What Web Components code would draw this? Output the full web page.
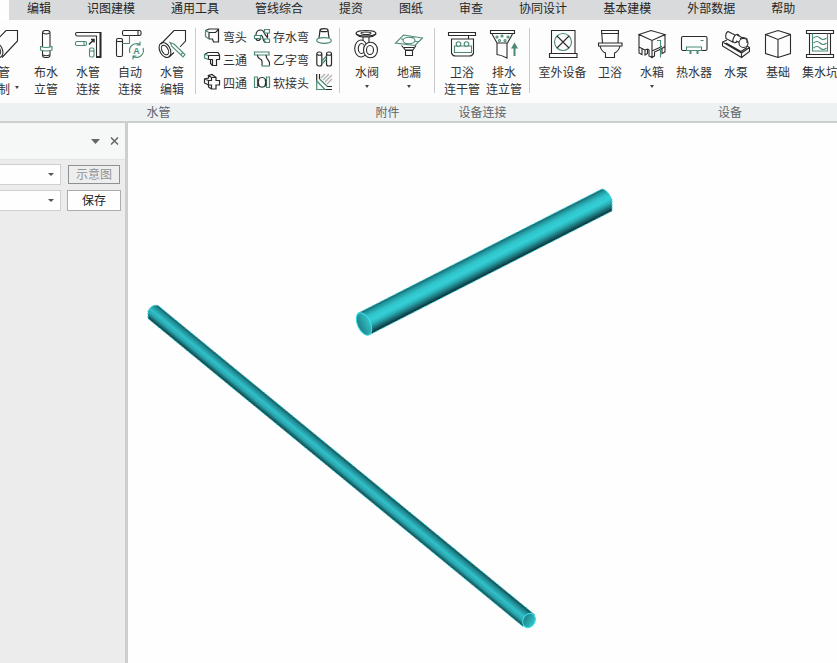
<!DOCTYPE html>
<html lang="zh-CN">
<head>
<meta charset="utf-8">
<title>水管建模</title>
<style>
html, body { height: 100%; }
body { margin: 0; overflow: hidden; background: #fefefe; font: 12px/17px "Noto Sans CJK SC", "Liberation Sans", sans-serif; color: #333; }
</style>
</head>
<body>
<bim-app></bim-app>
<script>
const ICONS = {
  draw: `<path d="M3 14 16 .5H27.5V11L12 27.5"/><ellipse cx="7" cy="20" rx="5.2" ry="8" transform="rotate(-28 7 20)"/><ellipse cx="7" cy="20" rx="3" ry="5.2" transform="rotate(-28 7 20)"/>`,
  riser: `<rect x="10.5" y=".5" width="7.5" height="27" rx="2.5"/><path d="M11 3q3.2 2 6.5 0M11 25q3.2 1.500 6.500 0"/><path class="g w" d="M8.500 16.500q5.700 2 11.500 0v3.500q-5.800 2-11.500 0z"/>`,
  join: `<path d="M26.500 27V2.500H3Q1.500 2.500 1.500 4T3 6H22.500V27"/><path d="M26.500 2V27H22" stroke-width="2"/><rect class="g" x="1.500" y="11.500" width="11" height="4" rx="1.500"/><path class="g" d="M10 11.500v4"/><rect class="g" x="15.500" y="18" width="4.500" height="9" rx="1.500"/><path class="g" d="M15.500 21h4.500"/><path d="M15 14.500 19.500 10M17 9.500h3v3" stroke-width="1.500"/>`,
  auto: `<rect x="6.500" y=".5" width="18.500" height="5" rx="1.500"/><path d="M22 .5v5"/><rect x=".5" y="8.500" width="6" height="18" rx="1.500"/><path d="M.5 11.500h6"/><path class="g" d="M13.500 5.500v8h-7"/><path class="g" d="M14 23a7 7 0 0 1 10-8.500M27 18a7 7 0 0 1-10 8.500M24 11.500v3.500h-3.500M17 29.500V26h3.500"/><text class="t" x="20.500" y="24" text-anchor="middle">A</text>`,
  edit: `<path d="M3 14 16 .5H27.500V11L22 17M11 27l5-4.500"/><ellipse cx="7" cy="20" rx="5.200" ry="8" transform="rotate(-28 7 20)"/><ellipse cx="7" cy="20" rx="3" ry="5.200" transform="rotate(-28 7 20)"/><path class="g w" d="M12 12.500l4 1.500L27 24.500 25 27 14 16.500zM23 24.500l2-2"/>`,
  valve: `<ellipse cx="13" cy="3.300" rx="10" ry="2.800"/><ellipse cx="13" cy="3.300" rx="5" ry="1.300"/><path d="M3 4q3 3 7 3v4M23 4q-3 3-7 3v5M10 7h6"/><ellipse class="w" cx="8" cy="18.500" rx="6.300" ry="8.500"/><ellipse cx="8.500" cy="18.500" rx="3.200" ry="5"/><ellipse class="w" cx="17.500" cy="20" rx="7" ry="7.800"/><ellipse cx="17" cy="20" rx="3.500" ry="4.500"/>`,
  drain: `<path class="g" d="M8.500 5 27.500 8 20 15.500.5 13zM6 9l18 3M10 14l8-7"/><ellipse class="g w" cx="14" cy="10.500" rx="6" ry="3.200"/><path d="M6.500 15.500 10.500 20h7.500l3-4.500M10.500 20.500h7V25.500h-7zM9 17.500h10"/>`,
  tub: `<path d="M.5 2.500h27v3H.5zM20.500 5.500v3M3.500 9h22v14q-1 3-4 3h-14q-3 0-4-3z"/><path class="g" d="M6.500 16h17v6.500h-17z"/><circle class="g w" cx="10.500" cy="14" r="2.300"/><circle class="g w" cx="18.500" cy="14" r="2.300"/>`,
  drop: `<path d="M.5.500h24v3H.5zM2 4l5 9h10.500l5-9M7 13v11.500q4 .5 10 3.500V13"/><g class="g"><circle cx="7" cy="7" r="1"/><circle cx="12" cy="6" r="1"/><circle cx="18" cy="7" r="1"/><circle cx="9.500" cy="10.500" r="1"/><circle cx="15" cy="10.500" r="1"/></g><path class="g" d="M24.500 26V16" stroke-width="2"/><path class="gf" d="M21 18.500 24.500 12.500 28 18.500z"/>`,
  outdoor: `<path d="M2.500.500H26v23H2.500zM.5 23.500H28v4H.5z"/><circle class="g" cx="14" cy="12" r="8.500"/><path d="M8 6l12 12M20 6L8 18"/>`,
  toilet: `<path d="M5.500.500h17L22 13H6.500zM6 3.500h16M2.500 13h23.500v3H2.500zM4 16q1 5 5.500 7v4.500h9V23q4.500-2 5.500-7"/>`,
  tank: `<path d="M1 4.500 13 .5 27 4.500 14 10.500zM1 4.500V23l3 1.500V18.500L1 17M27 4.500V22l-3 1.500V18.500M14 10.500V21l10-4.500M4 18.500l3 1.500v5l2.500-1.500V19M7 20l2.500-1M9.500 19l1.500 1v6l3 1.500V21M14 27.500l2.500-1.500v-4L24 18.500l3-2"/><path class="g" d="M19 10.500h3.500v17"/>`,
  heater: `<rect x="1.500" y="6.500" width="25.500" height="14" rx="1.500"/><path class="g w" d="M6.500 20.500V17h15v3.500zM20.500 10.500h3"/><path class="g" d="M10.500 20v4M17.500 20v4" stroke-width="2"/>`,
  pump: `<path d="M5 10 .5 12v4L19.500 27.500 27.500 21.500v-4L22 14M.5 12l19 11 8-5.500M19.500 23v4.500M4 13l15 8.500 6-4"/><path class="w" d="M6 1.500l7 3.500-2.500 7L4 8.500Q3 3 6 1.500z"/><ellipse class="w" cx="14" cy="8.500" rx="2.500" ry="4.500" transform="rotate(25 14 8.500)"/><path class="w" d="M15 5l6 3v6l-7-3"/><circle class="w" cx="21.500" cy="13" r="4.500"/><path d="M18 9q3-3 7 0v4"/>`,
  cube: `<path d="M1.500 4.500 14 .5 26.500 4.500V23.500L14 27.500 1.500 23.500zM1.500 4.500 14 9.500 26.500 4.500M14 9.500v18"/>`,
  sump: `<path d="M.5.500H27.500v3H.5zM.5 24.500h27v3H.5zM3.500 3.500v21M24.500 3.500v21"/><path class="g" d="M6.500 3.500V21h15V3.500M7.500 8q3.500-3 6.500 0t6.500 0M7.500 13q3.500-3 6.500 0t6.500 0M7.500 18q3.500-3 6.500 0t6.500 0"/>`,
  elbow: `<path d="M1.500 2.500 5 1h9.500V14H9.500L8.500 11H5M5 11V4.500h6.500l3-3"/><path class="g" d="M1.500 2.500 5 4.500M1.500 2.500V8.500L5 11"/>`,
  tee: `<path d="M.5 3.500 4 1.500h10l1.500 2.500v4.500h-3V14.500h-4V8.500H4.500V4.500H15.500M8.500 14.500l-2-2V8.500"/><path class="g" d="M4.500 4.500.5 3.500v3.500l4 1.500"/>`,
  cross: `<path d="M7.500 3.500H12V6.500h3.500v4.500H12V15H7.500V11H4.500V6.500H7.500zM7.500 3.500 4.500 1.500 8 .5l4 3M4.500 1.500V4L.5 5v4l4 2M.5 5l4 1.500M7.500 15l-3-2v-2"/>`,
  trap: `<path d="M2 7q0-5 5-5 2 0 3 2.500T13.500 9.500V5M6 8q2-2 3 2.500Q9.500 14 12 14M2 10.500q0 2 3 2l2-2"/><path class="g" d="M10.500 1.500h5v3.500h-5zM.5 7.500h6v3h-6zM10.500 11h5v3.500h-5z"/>`,
  offset: `<path class="g" d="M.5 1h14.500v3H.5z"/><path d="M3.500 4Q3.500 7 7 8.500q1.500 1 1 6M12 4q0 3 2.500 5.500 1.500 1.500 1 5"/><path class="g" d="M7.500 15h8.500"/>`,
  hose: `<path class="g" d="M.5 3h3v10.500H.5zM12.500 3h3v10.500H12.500z"/><path d="M3.500 6.500Q8 0 12.500 6.500M3.500 10.500Q8 16 12.500 10.500M5 5.500q-2 3 0 6M11 5.500q2 3 0 6"/>`,
  cone: `<ellipse cx="8" cy="2.200" rx="4" ry="1.500"/><path d="M4 2.500 3 10M12 2.500 13 10"/><ellipse class="g" cx="8" cy="12.500" rx="7.300" ry="2.800"/>`,
  twin: `<rect x=".8" y="1" width="5" height="14" rx="2"/><rect x="10.500" y="1" width="5" height="14" rx="2"/><path d="M1 3.500q2.500 1.500 5 0M10.500 3.500q2.500 1.500 5 0"/><path class="g" d="M6 10l4.500-5M6 13l4.500-5"/>`,
  corner: `<path d="M.7 0V7M3.500 0V5M9 15.500h7M11 12.500h5"/><path class="g" d="M.7 7V15.500H9zM3.500 5l8 7.500M.7 7 9 15.500"/><path d="M5 4l4-4M7 6l6-6M9 8l7-7M11 10l5-5" stroke="#b0b0b0"/>`
};

function define(name, markup, setup) {
  const template = document.createElement('template');
  template.innerHTML = markup;
  customElements.define(name, class extends HTMLElement {
    constructor() { super(); this.attachShadow({ mode: 'open' }).append(template.content.cloneNode(true)); }
    connectedCallback() { if (setup) setup(this, this.shadowRoot); }
  });
}

define('line-icon', `<style>
:host { display: block; flex: none; line-height: 0; }
svg { display: block; overflow: visible; fill: none; stroke: #2a2a2a; stroke-width: 1.1; }
:host([size="16"]) svg { stroke-width: 1.2; }
.g { stroke: #4c8976; } .w { fill: #fdfdfe; } .gf { fill: #4c8976; stroke: none; }
.t { font: bold 9px "Liberation Sans", sans-serif; fill: #4c8976; stroke: none; }
</style><svg aria-hidden="true"></svg>`, (host, root) => {
  const size = host.getAttribute('size') || 28, svg = root.querySelector('svg');
  svg.setAttribute('width', size); svg.setAttribute('height', size);
  svg.setAttribute('viewBox', `0 0 ${size} ${size}`);
  svg.innerHTML = ICONS[host.getAttribute('name')];
});

define('ribbon-tab', `<style>
:host { display: block; flex: none; }
button { display: block; font: inherit; color: #262626; border: 0; margin: 0; padding: 0 18px 4px; background: none; height: 20px; line-height: 16px; white-space: nowrap; }
</style><button type="button"><slot></slot></button>`);

define('ribbon-tabs', `<style>
:host { display: flex; height: 20px; margin-left: 9px; background: #d8dadc; overflow: hidden; }
</style><slot></slot>`);

define('tool-button', `<style>
:host { display: block; flex: none; width: 42px; }
:host([wide]) { width: 53px; }
button { display: flex; flex-direction: column; align-items: center; width: 100%; padding: 5px 0 0; margin: 0; border: 0; background: none; font: inherit; color: inherit; }
.label { margin-top: 5px; white-space: nowrap; text-align: center; position: relative; }
i { display: none; border: 2px solid transparent; border-top: 3px solid #444; border-bottom: 0; }
:host([menu="below"]) i { display: block; margin-top: 5px; }
:host([menu="side"]) i { display: block; position: absolute; right: -9px; bottom: 8px; }
</style><button type="button"><span class="icon"></span><span class="label"><slot></slot><i></i></span></button>`, (host, root) => {
  root.querySelector('.icon').innerHTML = `<line-icon name="${host.getAttribute('icon')}"></line-icon>`;
  if (host.getAttribute('menu') === 'below') root.querySelector('button').append(root.querySelector('i'));
});

define('mini-tool', `<style>
:host { display: block; }
button { display: flex; align-items: center; gap: 3px; height: 23px; width: 100%; padding: 0 0 1px; margin: 0; border: 0; background: none; font: inherit; color: inherit; white-space: nowrap; }
</style><button type="button"><span class="icon"></span><slot></slot></button>`, (host, root) => {
  root.querySelector('.icon').innerHTML = `<line-icon size="16" name="${host.getAttribute('icon')}"></line-icon>`;
});

define('mini-tools', `<style>
:host { display: grid; grid-template-columns: 50px 62px 19px; grid-auto-rows: 23px; padding-left: 9px; margin-left: 2px; position: relative; }
:host::before { content: ""; position: absolute; left: 0; top: 3px; height: 66px; width: 1px; background: #c8cacb; }
</style><slot></slot>`);

define('ribbon-group', `<style>
:host { display: flex; flex-direction: column; flex: none; }
:host([grow]) { flex-basis: 400px; }
.tools { display: flex; align-items: flex-start; height: 78px; padding: 5px 4px 0 6px; position: relative; border-right: 1px solid transparent; }
.tools::after { content: ""; position: absolute; right: -1px; top: 8px; height: 65px; width: 1px; background: #c8cacb; }
.caption { height: 18px; text-align: center; background: #edf1f2; color: #606468; }
</style><div class="tools"><slot></slot></div><div class="caption"></div>`, (host, root) => {
  root.querySelector('.caption').textContent = host.getAttribute('caption');
});

define('tool-ribbon', `<style>
:host { display: block; overflow: hidden; background: #fdfdfe; border-bottom: 2px solid #cbcfd0; }
.row { display: flex; margin-left: -23px; }
</style><div class="row"><slot></slot></div>`);

define('option-select', `<style>
:host { display: block; position: relative; flex: 1; min-width: 0; margin-left: -8px; }
select { display: block; appearance: none; width: 100%; height: 21px; border: 1px solid #cfd1d1; border-radius: 0; background: #fefefe; font: inherit; }
svg { position: absolute; right: 7px; top: 9px; pointer-events: none; }
</style><select></select><svg width="6" height="3" viewBox="0 0 6 3" aria-hidden="true"><path d="M0 0h6L3 3z" fill="#555"/></svg>`, (host, root) => {
  root.querySelector('select').setAttribute('aria-label', host.getAttribute('label'));
});

define('side-panel', `<style>
:host { display: block; flex: none; width: 125px; box-sizing: content-box; background: #ececec; border-right: 3px solid #cccfcf; }
header { display: flex; align-items: center; justify-content: flex-end; gap: 10px; height: 36px; padding-right: 6px; background: #f6f7f7; border-bottom: 1px solid #e2e3e3; }
header button { padding: 0; border: 0; background: none; display: block; }
svg { display: block; }
.row { display: flex; align-items: center; gap: 6px; padding: 0 4px 0 0; height: 26px; }
.rows { padding-top: 1px; }
.act { flex: none; width: 54px; height: 21px; padding: 0 0 2px; font: inherit; line-height: 17px; background: #fefefe; border: 1px solid #aaadad; color: #222; }
.act:disabled { width: 52px; height: 19px; line-height: 15px; margin: 0 1px; background: #eee; border-color: #8d9191; color: #909496; }
</style>
<header>
<button type="button" aria-label="菜单"><svg width="9" height="5" viewBox="0 0 9 5"><path d="M0 0h9L4.500 5z" fill="#666"/></svg></button>
<button type="button" aria-label="关闭"><svg width="9" height="8" viewBox="0 0 9 8"><path d="M1 .5l7 7M8 .5l-7 7" stroke="#666" stroke-width="1.500"/></svg></button>
</header>
<div class="rows">
<div class="row"><option-select label="系统类型"></option-select><button class="act" type="button" disabled>示意图</button></div>
<div class="row"><option-select label="方案"></option-select><button class="act" type="button">保存</button></div>
</div>`);

define('model-view', `<style>
:host { display: block; flex: 1; min-width: 0; background: #fefefe; overflow: hidden; }
svg { display: block; width: 100%; height: 100%; }
.edge { fill: none; stroke: #30cbd3; stroke-dasharray: 2 1; }
</style>
<svg viewBox="128 123 709 540" preserveAspectRatio="xMinYMin meet" role="img" aria-label="水管">
<defs>
<linearGradient id="a" gradientUnits="userSpaceOnUse" x1="479.700" y1="251" x2="490.900" y2="273"><stop offset="0" stop-color="#145a60"/><stop offset=".12" stop-color="#22959c"/><stop offset=".3" stop-color="#30c3ca"/><stop offset=".5" stop-color="#34d0d7"/><stop offset=".65" stop-color="#2bb1b8"/><stop offset=".82" stop-color="#1b7178"/><stop offset="1" stop-color="#08282c"/></linearGradient>
<linearGradient id="b" gradientUnits="userSpaceOnUse" x1="347" y1="460" x2="336.200" y2="473.100"><stop offset="0" stop-color="#0f4348"/><stop offset=".2" stop-color="#20868d"/><stop offset=".5" stop-color="#30c0c9"/><stop offset=".72" stop-color="#29a6ae"/><stop offset="1" stop-color="#0d4044"/></linearGradient>
<linearGradient id="c"><stop offset="0" stop-color="#1d7f85"/><stop offset="1" stop-color="#32c4ca"/></linearGradient>
</defs>
<path fill="url(#a)" d="M357.500 313.500 602 189Q608 190 612 200V211L369 335z"/>
<path class="edge" d="M357.500 313.500 602 189Q608 190 612 200V211L369 335"/>
<ellipse cx="364" cy="324" rx="6.500" ry="12" transform="rotate(-25 364 324)" fill="url(#c)" stroke="#3ce0e5"/>
<path fill="url(#b)" d="M158 305.500 535 615 523 626.500 148 318.500V311Q152 304 158 305.500z"/>
<path class="edge" d="M523 626.500 148 318.500V311Q152 304 158 305.500L535 615"/>
<ellipse cx="529" cy="620.500" rx="6" ry="7.500" transform="rotate(30 529 620.500)" fill="url(#c)" stroke="#3ce0e5"/>
</svg>`);

define('bim-app', `<style>
:host { display: flex; flex-direction: column; height: 100vh; }
main { display: flex; flex: 1; min-height: 0; }
</style>
<ribbon-tabs>
<ribbon-tab>编辑</ribbon-tab><ribbon-tab>识图建模</ribbon-tab><ribbon-tab>通用工具</ribbon-tab><ribbon-tab>管线综合</ribbon-tab><ribbon-tab>提资</ribbon-tab><ribbon-tab>图纸</ribbon-tab><ribbon-tab>审查</ribbon-tab><ribbon-tab>协同设计</ribbon-tab><ribbon-tab>基本建模</ribbon-tab><ribbon-tab>外部数据</ribbon-tab><ribbon-tab>帮助</ribbon-tab>
</ribbon-tabs>
<tool-ribbon>
<ribbon-group caption="水管">
<tool-button icon="draw" menu="side">管<br>制</tool-button>
<tool-button icon="riser">布水<br>立管</tool-button>
<tool-button icon="join">水管<br>连接</tool-button>
<tool-button icon="auto">自动<br>连接</tool-button>
<tool-button icon="edit">水管<br>编辑</tool-button>
<mini-tools>
<mini-tool icon="elbow">弯头</mini-tool><mini-tool icon="trap">存水弯</mini-tool><mini-tool icon="cone"></mini-tool>
<mini-tool icon="tee">三通</mini-tool><mini-tool icon="offset">乙字弯</mini-tool><mini-tool icon="twin"></mini-tool>
<mini-tool icon="cross">四通</mini-tool><mini-tool icon="hose">软接头</mini-tool><mini-tool icon="corner"></mini-tool>
</mini-tools>
</ribbon-group>
<ribbon-group caption="附件">
<tool-button icon="valve" menu="below">水阀</tool-button>
<tool-button icon="drain" menu="below">地漏</tool-button>
</ribbon-group>
<ribbon-group caption="设备连接">
<tool-button icon="tub">卫浴<br>连干管</tool-button>
<tool-button icon="drop">排水<br>连立管</tool-button>
</ribbon-group>
<ribbon-group caption="设备" grow>
<tool-button icon="outdoor" wide>室外设备</tool-button>
<tool-button icon="toilet">卫浴</tool-button>
<tool-button icon="tank" menu="below">水箱</tool-button>
<tool-button icon="heater">热水器</tool-button>
<tool-button icon="pump">水泵</tool-button>
<tool-button icon="cube">基础</tool-button>
<tool-button icon="sump">集水坑</tool-button>
</ribbon-group>
</tool-ribbon>
<main><side-panel></side-panel><model-view></model-view></main>`);
</script>
</body>
</html>
